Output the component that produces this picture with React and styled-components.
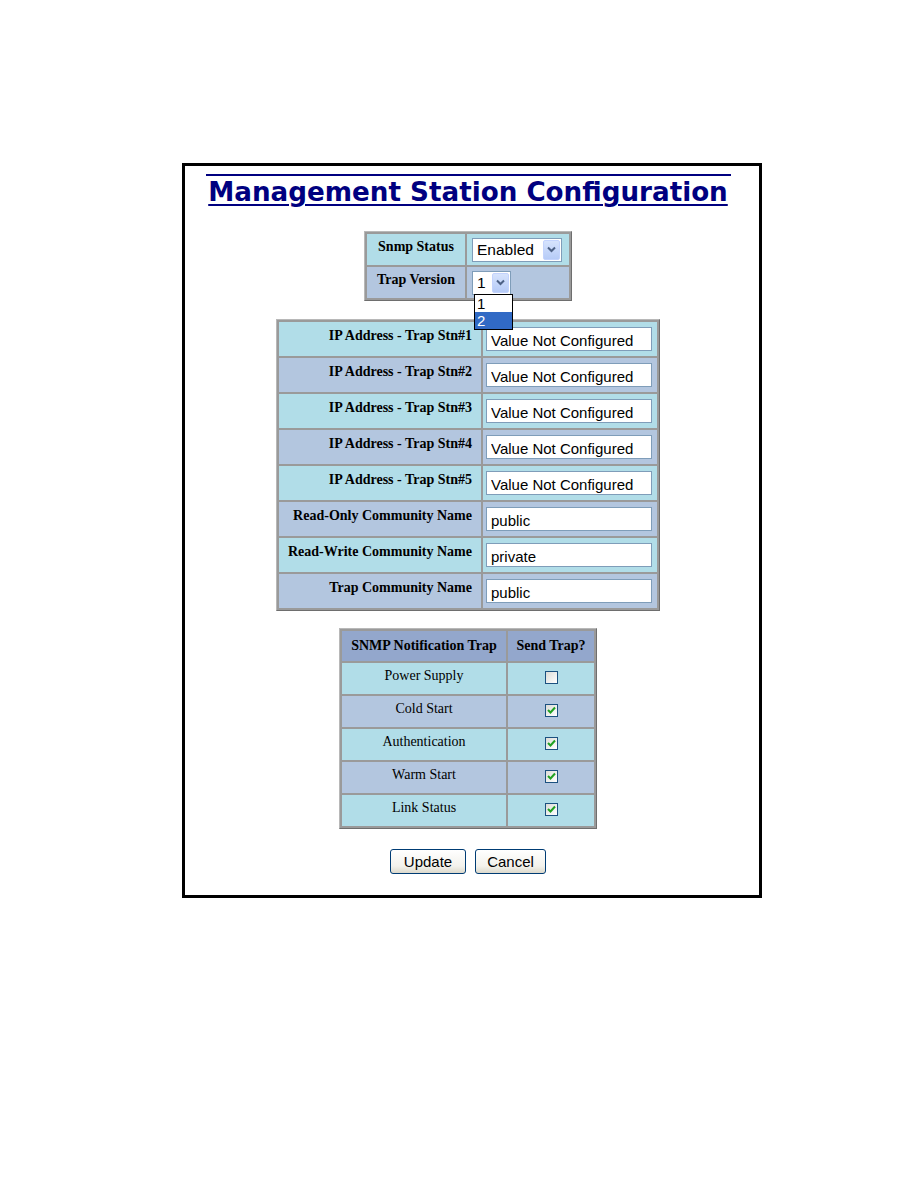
import React from 'react';
import styled, {createGlobalStyle} from 'styled-components';

const GlobalStyle = createGlobalStyle`
  body {
    margin: 0;
    background: #fff;
    font-family: "Liberation Serif", "Times New Roman", serif;
  }
`;

const LIGHT = '#b1dde8';
const STEEL = '#b3c6df';
const HEAD = '#93a7cc';

const Page = styled.div`
  width: 918px;
  height: 1188px;
  padding: 163px 0 0 182px;
  box-sizing: border-box;
`;

const Frame = styled.div`
  width: 580px;
  height: 735px;
  box-sizing: border-box;
  border: 3px solid #000;
  padding: 8px 8px 0 0;
  display: flex;
  flex-direction: column;
  align-items: center;
`;

const Title = styled.h1`
  margin: 0;
  width: 525px;
  border-top: 2px solid #000080;
  padding-top: 1px;
  font-family: "DejaVu Sans", Verdana, sans-serif;
  font-weight: bold;
  font-size: 26.2px;
  line-height: 30px;
  color: #000080;
  text-decoration: underline;
  text-decoration-thickness: 2px;
  text-underline-offset: 3px;
  white-space: nowrap;
  text-align: center;
`;

const Grid = styled.table`
  border-collapse: separate;
  border-spacing: 2px;
  background: #9a9a9a;
  border: 1px solid;
  border-color: #b8b8b8 #6e6e6e #6e6e6e #b8b8b8;
  margin-top: ${p => p.$top}px;
`;

const Cell = styled.td`
  background: ${p => p.$bg};
  height: ${p => p.$h}px;
  width: ${p => p.$w}px;
  padding: 0 ${p => (p.$right ? 9 : 3)}px 0 ${p => (p.$field ? 5 : 3)}px;
  text-align: ${p => (p.$right ? 'right' : p.$center ? 'center' : 'left')};
  font-weight: ${p => (p.$bold ? 'bold' : 'normal')};
  font-size: 14px;
  color: #000;
  vertical-align: middle;
  box-sizing: border-box;
  position: relative;
`;

const Label = styled.span`
  position: relative;
  top: -3px;
`;

const TextBox = styled.input`
  width: 166px;
  height: 24px;
  box-sizing: border-box;
  border: 1px solid #7f9db9;
  padding: 2px 4px 0;
  font-family: "Liberation Sans", Arial, sans-serif;
  font-size: 15px;
  color: #000;
  background: #fff;
  outline: none;
`;

const Select = styled.div`
  display: inline-flex;
  align-items: center;
  justify-content: space-between;
  width: ${p => p.$w}px;
  height: 24px;
  box-sizing: border-box;
  border: 1px solid #7f9db9;
  background: #fff;
  padding: 0 1px 0 4px;
  font-family: "Liberation Sans", Arial, sans-serif;
  font-size: 15.5px;
  position: relative;
`;

const ArrowBtn = styled.span`
  width: 17px;
  height: 20px;
  background: linear-gradient(#d6e3fd, #b6cbf7);
  border: 1px solid #c3d3fd;
  border-radius: 2px;
  box-sizing: border-box;
  display: flex;
  align-items: center;
  justify-content: center;
`;

const DropList = styled.div`
  position: absolute;
  top: 22px;
  left: 1px;
  width: 37px;
  border: 1px solid #000;
  background: #fff;
  z-index: 2;
  font-family: "Liberation Sans", Arial, sans-serif;
  font-size: 15px;
`;

const DropItem = styled.div`
  height: 17px;
  line-height: 17px;
  padding-left: 2px;
  background: ${p => (p.$sel ? '#316ac5' : '#fff')};
  color: ${p => (p.$sel ? '#fff' : '#000')};
`;

const Check = styled.span`
  display: inline-flex;
  align-items: center;
  justify-content: center;
  width: 13px;
  height: 13px;
  box-sizing: border-box;
  border: 1px solid #1c5180;
  background: linear-gradient(135deg, #dcdcd7, #fff);
  vertical-align: middle;
  position: relative;
  top: -2px;
`;

const Buttons = styled.div`
  display: flex;
  gap: 9px;
  margin-top: 20px;
`;

const Button = styled.button`
  height: 25px;
  width: ${p => p.$w}px;
  border: 1px solid #003c74;
  border-radius: 3px;
  background: linear-gradient(#ffffff, #f3f2ec 70%, #dcd9cc);
  font-family: "Liberation Sans", Arial, sans-serif;
  font-size: 15px;
  color: #000;
  padding: 0;
`;

const Chevron = () => (
  <svg width="9" height="7" viewBox="0 0 9 7">
    <path d="M1 1.5 L4.5 5 L8 1.5" fill="none" stroke="#4d6185" strokeWidth="2" />
  </svg>
);

const Tick = () => (
  <svg width="9" height="8" viewBox="0 0 9 8">
    <path d="M1 4 L3.5 6.5 L8 1.5" fill="none" stroke="#21a121" strokeWidth="2" />
  </svg>
);

const stations = [
  ['IP Address - Trap Stn#1', 'Value Not Configured'],
  ['IP Address - Trap Stn#2', 'Value Not Configured'],
  ['IP Address - Trap Stn#3', 'Value Not Configured'],
  ['IP Address - Trap Stn#4', 'Value Not Configured'],
  ['IP Address - Trap Stn#5', 'Value Not Configured'],
  ['Read-Only Community Name', 'public'],
  ['Read-Write Community Name', 'private'],
  ['Trap Community Name', 'public']
];

const traps = [
  ['Power Supply', false],
  ['Cold Start', true],
  ['Authentication', true],
  ['Warm Start', true],
  ['Link Status', true]
];

export default function App() {
  return (
    <Page>
      <GlobalStyle />
      <Frame>
        <Title>Management Station Configuration</Title>

        <Grid $top={24}>
          <tbody>
            <tr>
              <Cell $bg={LIGHT} $h={31} $w={98} $bold $center>
                <Label>Snmp Status</Label>
              </Cell>
              <Cell $bg={LIGHT} $h={31} $w={102} $field>
                <Select $w={90}>
                  Enabled
                  <ArrowBtn>
                    <Chevron />
                  </ArrowBtn>
                </Select>
              </Cell>
            </tr>
            <tr>
              <Cell $bg={STEEL} $h={31} $bold $center>
                <Label>Trap Version</Label>
              </Cell>
              <Cell $bg={STEEL} $h={31} $field>
                <Select $w={39}>
                  1
                  <ArrowBtn>
                    <Chevron />
                  </ArrowBtn>
                  <DropList>
                    <DropItem>1</DropItem>
                    <DropItem $sel>2</DropItem>
                  </DropList>
                </Select>
              </Cell>
            </tr>
          </tbody>
        </Grid>

        <Grid $top={18}>
          <tbody>
            {stations.map(([label, value], i) => (
              <tr key={label}>
                <Cell $bg={i % 2 ? STEEL : LIGHT} $h={34} $w={202} $bold $right>
                  <Label>{label}</Label>
                </Cell>
                <Cell $bg={i % 2 ? STEEL : LIGHT} $w={174}>
                  <TextBox readOnly value={value} />
                </Cell>
              </tr>
            ))}
          </tbody>
        </Grid>

        <Grid $top={17}>
          <tbody>
            <tr>
              <Cell $bg={HEAD} $h={30} $w={164} $bold $center>
                SNMP Notification Trap
              </Cell>
              <Cell $bg={HEAD} $w={86} $bold $center>
                Send Trap?
              </Cell>
            </tr>
            {traps.map(([name, on], i) => (
              <tr key={name}>
                <Cell $bg={i % 2 ? STEEL : LIGHT} $h={31} $center>
                  <Label>{name}</Label>
                </Cell>
                <Cell $bg={i % 2 ? STEEL : LIGHT} $center>
                  <Check>{on && <Tick />}</Check>
                </Cell>
              </tr>
            ))}
          </tbody>
        </Grid>

        <Buttons>
          <Button $w={76}>Update</Button>
          <Button $w={71}>Cancel</Button>
        </Buttons>
      </Frame>
    </Page>
  );
}
